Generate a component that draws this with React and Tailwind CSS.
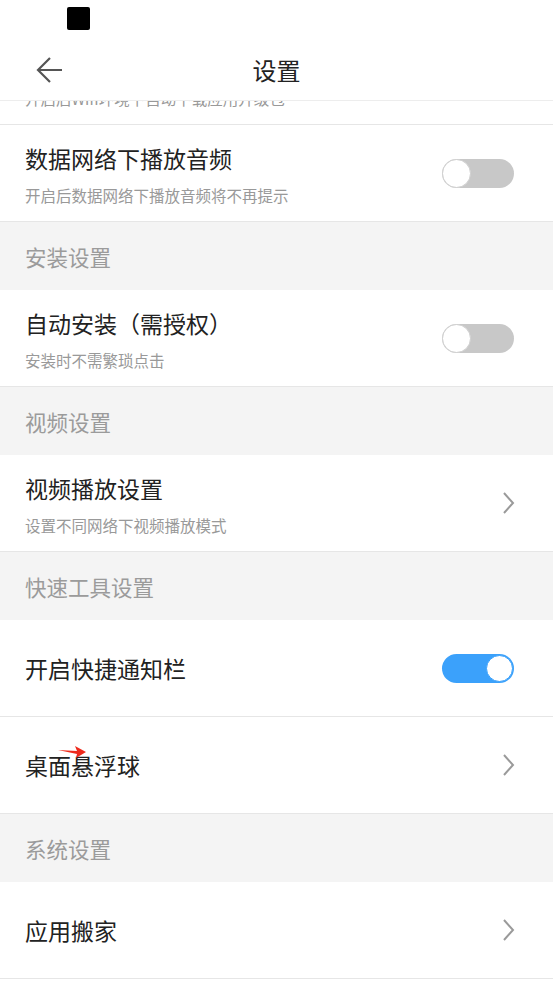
import React from "react";

const font = { fontFamily: '"Noto Sans CJK SC", "Noto Sans", sans-serif' };

function Toggle({ on }) {
  if (on) {
    return (
      <div className="w-[72px] h-[29px] rounded-full bg-[#3ba1fb] flex items-center justify-end pr-[1px] shrink-0">
        <div className="w-[27px] h-[27px] rounded-full bg-white border border-[#3ba1fb]" />
      </div>
    );
  }
  return (
    <div className="w-[72px] h-[29px] rounded-full bg-[#c8c8c8] flex items-center justify-start shrink-0">
      <div className="w-[29px] h-[29px] rounded-full bg-white border-[1.5px] border-[#cfcfcf]" />
    </div>
  );
}

function Chevron() {
  return (
    <svg width="14" height="24" viewBox="0 0 14 24" className="shrink-0 mr-[-1px]">
      <path d="M3 2 L12 12 L3 22" fill="none" stroke="#9a9a9a" strokeWidth="2" />
    </svg>
  );
}

function Row({ title, sub, right }) {
  return (
    <div className="h-[97px] bg-white border-b border-[#e6e6e6] px-[25px] flex items-center justify-between">
      <div className={sub ? "flex flex-col pt-[2px]" : "flex flex-col"}>
        <div className="text-[23px] leading-[30px] text-[#222]">{title}</div>
        {sub && <div className="text-[15.5px] leading-[22px] text-[#999] mt-[11px]">{sub}</div>}
      </div>
      <div className="pr-[14px] flex items-center">{right}</div>
    </div>
  );
}

function Section({ title }) {
  return (
    <div className="h-[68px] bg-[#f4f4f4] px-[25px] flex items-center pt-[3px]">
      <div className="text-[21.5px] text-[#9b9b9b]">{title}</div>
    </div>
  );
}

export default function App() {
  return (
    <div className="w-[553px] h-[984px] bg-white overflow-hidden" style={font}>
      <div className="h-[40px] pl-[67px] pt-[7px]">
        <div className="w-[23px] h-[23px] bg-black rounded-[2px]" />
      </div>
      <div className="h-[61px] flex items-center relative border-b border-[#ededed]">
        <div className="pl-[36px] flex items-center">
          <svg width="28" height="28" viewBox="0 0 28 28">
            <path d="M26 14 H3 M14 2 L2 14 L14 26" fill="none" stroke="#555" strokeWidth="2.2" />
          </svg>
        </div>
        <div className="absolute left-0 right-0 text-center text-[24px] text-[#222] pointer-events-none">设置</div>
      </div>
      <div className="h-[24px] overflow-hidden px-[25px] border-b border-[#e6e6e6]">
        <div className="text-[15.5px] leading-[22px] text-[#999] mt-[-14px]">开启后Wifi环境下自动下载应用升级包</div>
      </div>
      <Row title="数据网络下播放音频" sub="开启后数据网络下播放音频将不再提示" right={<Toggle on={false} />} />
      <Section title="安装设置" />
      <Row title="自动安装（需授权）" sub="安装时不需繁琐点击" right={<Toggle on={false} />} />
      <Section title="视频设置" />
      <Row title="视频播放设置" sub="设置不同网络下视频播放模式" right={<Chevron />} />
      <Section title="快速工具设置" />
      <Row title="开启快捷通知栏" right={<Toggle on={true} />} />
      <div className="relative">
        <Row title="桌面悬浮球" right={<Chevron />} />
        <svg className="absolute left-[57px] top-[29px]" width="30" height="14" viewBox="0 0 30 14">
          <polygon points="1,4 20,5 18,0 29,6 19,12 20,8" fill="#ee2a1c" />
        </svg>
      </div>
      <Section title="系统设置" />
      <Row title="应用搬家" right={<Chevron />} />
    </div>
  );
}
